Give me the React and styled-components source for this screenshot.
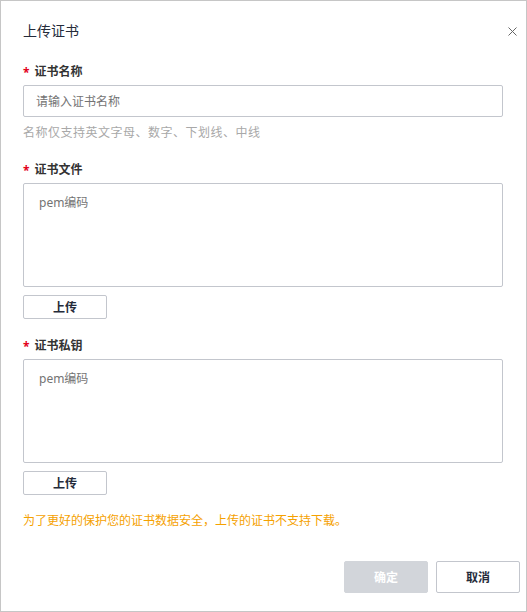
import React from 'react';
import styled, { createGlobalStyle } from 'styled-components';

const GlobalStyle = createGlobalStyle`
  html, body {
    margin: 0;
    padding: 0;
    background: #fff;
  }

  body {
    font-family: "Noto Sans", "Noto Sans CJK SC", sans-serif;
    color: #333;
  }

  * {
    box-sizing: border-box;
  }
`;

const Dialog = styled.div`
  display: flex;
  flex-direction: column;
  width: 527px;
  height: 612px;
  border: 1px solid #c6c6c6;
  background: #fff;
`;

const Header = styled.div`
  display: flex;
  justify-content: space-between;
  align-items: flex-start;
  padding: 20px 7px 0 22px;
`;

const Title = styled.h2`
  margin: 0;
  font-size: 14px;
  line-height: 20px;
  font-weight: 400;
  color: #252b3a;
`;

const CloseButton = styled.button`
  display: flex;
  align-items: center;
  justify-content: center;
  width: 14px;
  height: 14px;
  margin-top: 3px;
  padding: 0;
  border: none;
  background: none;
  cursor: pointer;
`;

const Body = styled.div`
  display: flex;
  flex-direction: column;
  padding: 22px 22px 0;
`;

const Field = styled.div`
  display: flex;
  flex-direction: column;
  align-items: flex-start;
  margin-top: ${props => props.$top || 0}px;
`;

const Label = styled.label`
  display: flex;
  align-items: center;
  font-size: 12px;
  line-height: 18px;
  font-weight: 700;
  color: #333;
  margin-bottom: 4px;
`;

const Required = styled.span`
  color: #e3001b;
  font-weight: 700;
  margin-right: 5px;
  position: relative;
  top: 1px;
`;

const TextInput = styled.input`
  width: 480px;
  height: 32px;
  padding: 0 12px;
  border: 1px solid #c3c6cd;
  border-radius: 2px;
  font-family: inherit;
  font-size: 12px;
  color: #333;
  outline: none;

  &::placeholder {
    color: #737373;
  }
`;

const TextArea = styled.textarea`
  display: block;
  width: 480px;
  height: 104px;
  padding: 9px 15px;
  border: 1px solid #c3c6cd;
  border-radius: 2px;
  font-family: inherit;
  font-size: 12px;
  line-height: 20px;
  color: #333;
  resize: none;
  outline: none;

  &::placeholder {
    color: #737373;
  }
`;

const Hint = styled.p`
  margin: 7px 0 0;
  font-size: 12px;
  line-height: 18px;
  letter-spacing: 0.5px;
  color: #a8a8a8;
`;

const UploadButton = styled.button`
  width: 84px;
  height: 24px;
  margin-top: 8px;
  padding: 0;
  border: 1px solid #c3c6cd;
  border-radius: 2px;
  background: #fff;
  font-family: inherit;
  font-size: 12px;
  font-weight: 700;
  color: #252b3a;
  cursor: pointer;
`;

const Warning = styled.p`
  margin: 17px 0 0;
  font-size: 12px;
  line-height: 18px;
  color: #f5a100;
`;

const Footer = styled.div`
  display: flex;
  justify-content: flex-end;
  gap: 8px;
  margin-top: auto;
  padding: 0 6px 18px 0;
`;

const FooterButton = styled.button`
  width: 84px;
  height: 32px;
  padding: 0;
  border: 1px solid ${props => (props.$primary ? '#d2d5da' : '#c3c6cd')};
  border-radius: 2px;
  background: ${props => (props.$primary ? '#d2d5da' : '#fff')};
  font-family: inherit;
  font-size: 12px;
  font-weight: 700;
  color: ${props => (props.$primary ? '#fff' : '#252b3a')};
  cursor: ${props => (props.$primary ? 'not-allowed' : 'pointer')};
`;

const CloseIcon = () => (
  <svg width="9" height="9" viewBox="0 0 9 9">
    <path d="M0.5 0.5 L8.5 8.5 M8.5 0.5 L0.5 8.5" stroke="#666" strokeWidth="1" fill="none" />
  </svg>
);

const App = () => {
  return (
    <>
      <GlobalStyle />
      <Dialog>
        <Header>
          <Title>上传证书</Title>
          <CloseButton aria-label="关闭">
            <CloseIcon />
          </CloseButton>
        </Header>
        <Body>
          <Field>
            <Label><Required>*</Required>证书名称</Label>
            <TextInput placeholder="请输入证书名称" />
            <Hint>名称仅支持英文字母、数字、下划线、中线</Hint>
          </Field>
          <Field $top={19}>
            <Label><Required>*</Required>证书文件</Label>
            <TextArea placeholder="pem编码" />
            <UploadButton>上传</UploadButton>
          </Field>
          <Field $top={18}>
            <Label><Required>*</Required>证书私钥</Label>
            <TextArea placeholder="pem编码" />
            <UploadButton>上传</UploadButton>
          </Field>
          <Warning>为了更好的保护您的证书数据安全，上传的证书不支持下载。</Warning>
        </Body>
        <Footer>
          <FooterButton $primary disabled>确定</FooterButton>
          <FooterButton>取消</FooterButton>
        </Footer>
      </Dialog>
    </>
  );
};

export default App;
